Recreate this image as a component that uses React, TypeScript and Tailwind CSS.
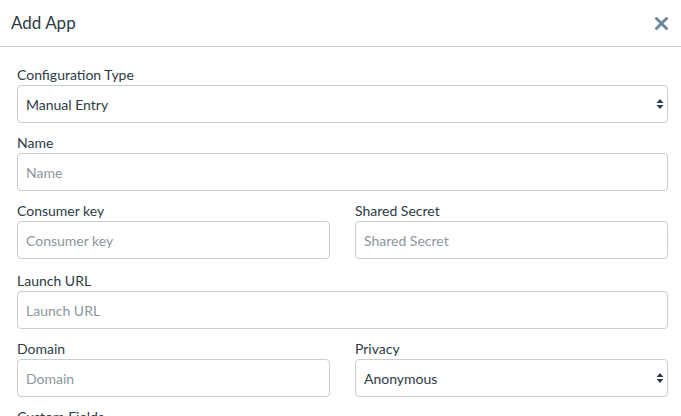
import React from "react";

function Label({ children }: { children: React.ReactNode }) {
  return (
    <label className="block h-5 text-[14px] leading-5 text-[#2d3b45]">{children}</label>
  );
}

function TextField({ label }: { label: string }) {
  return (
    <div className="flex flex-col">
      <Label>{label}</Label>
      <input
        placeholder={label}
        className="h-[38px] w-full rounded-[4px] border border-[#c7cdd1] bg-white px-[8px] text-[14px] text-[#2d3b45] outline-none placeholder:text-[#8b969e]"
      />
    </div>
  );
}

function SelectField({ label, value }: { label: string; value: string }) {
  return (
    <div className="flex flex-col">
      <Label>{label}</Label>
      <div className="relative">
        <select
          defaultValue={value}
          className="h-[38px] w-full appearance-none rounded-[4px] border border-[#c7cdd1] bg-white px-[8px] text-[14px] text-[#2d3b45] outline-none"
        >
          <option>{value}</option>
        </select>
        <svg
          className="pointer-events-none absolute right-[4px] top-[13px]"
          width="8"
          height="12"
          viewBox="0 0 8 12"
        >
          <path d="M4 1 L7.5 5 L0.5 5 Z" fill="#2d3b45" />
          <path d="M4 11 L7.5 7 L0.5 7 Z" fill="#2d3b45" />
        </svg>
      </div>
    </div>
  );
}

export default function App() {
  return (
    <div
      className="h-[416px] w-[681px] overflow-hidden bg-white"
      style={{ fontFamily: "Lato, 'Liberation Sans', sans-serif" }}
    >
      <div className="flex h-[47px] items-center justify-between border-b border-[#c7cdd1] pl-[11px] pr-[13px]">
        <h2 className="text-[17px] text-[#2d3b45]">Add App</h2>
        <svg width="13" height="13" viewBox="0 0 13 13">
          <path
            d="M1.5 1.5 L11.5 11.5 M11.5 1.5 L1.5 11.5"
            stroke="#6b8799"
            strokeWidth="3"
            strokeLinecap="round"
          />
        </svg>
      </div>
      <div className="flex flex-col gap-[10px] px-[13px] pl-[17px] pt-[18px]">
        <SelectField label="Configuration Type" value="Manual Entry" />
        <TextField label="Name" />
        <div className="grid grid-cols-2 gap-x-[25px]">
          <TextField label="Consumer key" />
          <TextField label="Shared Secret" />
        </div>
        <div className="mt-[2px]">
          <TextField label="Launch URL" />
        </div>
        <div className="grid grid-cols-2 gap-x-[25px]">
          <TextField label="Domain" />
          <SelectField label="Privacy" value="Anonymous" />
        </div>
        <Label>Custom Fields</Label>
      </div>
    </div>
  );
}
